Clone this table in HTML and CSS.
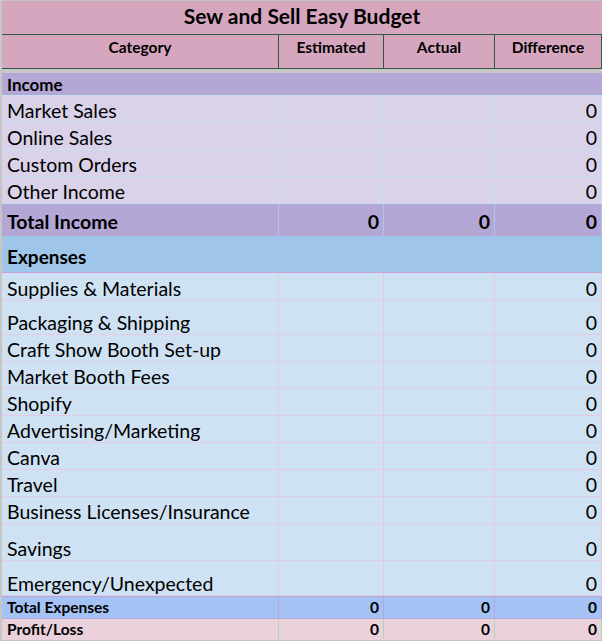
FILE: index.html
```html
<!DOCTYPE html>
<html lang="en">
<head>
<meta charset="utf-8">
<title>Sew and Sell Easy Budget</title>
<link rel="stylesheet" href="styles.css">
</head>
<body>
<div class="sheet">
  <div class="title">Sew and Sell Easy Budget</div>
  <div class="row head">
    <div class="cell">Category</div>
    <div class="cell">Estimated</div>
    <div class="cell">Actual</div>
    <div class="cell">Difference</div>
  </div>
  <div class="gap"></div>

  <div class="row sec income-sec h23"><div class="cell">Income</div></div>
  <div class="row inc h27"><div class="cell">Market Sales</div><div class="cell"></div><div class="cell"></div><div class="cell num">0</div></div>
  <div class="row inc h27"><div class="cell">Online Sales</div><div class="cell"></div><div class="cell"></div><div class="cell num">0</div></div>
  <div class="row inc h27"><div class="cell">Custom Orders</div><div class="cell"></div><div class="cell"></div><div class="cell num">0</div></div>
  <div class="row inc h27"><div class="cell">Other Income</div><div class="cell"></div><div class="cell"></div><div class="cell num">0</div></div>
  <div class="row tot-inc"><div class="cell">Total Income</div><div class="cell num">0</div><div class="cell num">0</div><div class="cell num">0</div></div>

  <div class="row sec exp-sec"><div class="cell">Expenses</div></div>
  <div class="row exp h28"><div class="cell">Supplies &amp; Materials</div><div class="cell"></div><div class="cell"></div><div class="cell num">0</div></div>
  <div class="row exp h34"><div class="cell">Packaging &amp; Shipping</div><div class="cell"></div><div class="cell"></div><div class="cell num">0</div></div>
  <div class="row exp h27"><div class="cell">Craft Show Booth Set-up</div><div class="cell"></div><div class="cell"></div><div class="cell num">0</div></div>
  <div class="row exp h27"><div class="cell">Market Booth Fees</div><div class="cell"></div><div class="cell"></div><div class="cell num">0</div></div>
  <div class="row exp h27"><div class="cell">Shopify</div><div class="cell"></div><div class="cell"></div><div class="cell num">0</div></div>
  <div class="row exp h27"><div class="cell">Advertising/Marketing</div><div class="cell"></div><div class="cell"></div><div class="cell num">0</div></div>
  <div class="row exp h27"><div class="cell">Canva</div><div class="cell"></div><div class="cell"></div><div class="cell num">0</div></div>
  <div class="row exp h27"><div class="cell">Travel</div><div class="cell"></div><div class="cell"></div><div class="cell num">0</div></div>
  <div class="row exp h27"><div class="cell">Business Licenses/Insurance</div><div class="cell"></div><div class="cell"></div><div class="cell num">0</div></div>
  <div class="row exp h37"><div class="cell">Savings</div><div class="cell"></div><div class="cell"></div><div class="cell num">0</div></div>
  <div class="row exp h35"><div class="cell">Emergency/Unexpected</div><div class="cell"></div><div class="cell"></div><div class="cell num">0</div></div>

  <div class="row tot-exp"><div class="cell">Total Expenses</div><div class="cell num">0</div><div class="cell num">0</div><div class="cell num">0</div></div>
  <div class="row profit"><div class="cell">Profit/Loss</div><div class="cell num">0</div><div class="cell num">0</div><div class="cell num">0</div></div>
</div>
</body>
</html>
```

FILE: styles.css
```css
html, body {
  margin: 0;
  padding: 0;
  background: #c6c6c6;
}
body {
  font-family: Lato, "Liberation Sans", sans-serif;
  color: #000;
  width: 602px;
  height: 641px;
  overflow: hidden;
}
.sheet {
  padding: 1px 0 0 2px;
  width: 600px;
}
.title {
  height: 34px;
  box-sizing: border-box;
  background: #d5a6bd;
  border-bottom: 1px solid #2f5a42;
  text-align: center;
  font-weight: 700;
  font-size: 21px;
  line-height: 30px;
}
.row {
  display: grid;
  grid-template-columns: 277px 105px 111px 107px;
  box-sizing: border-box;
  border-bottom: 1px solid transparent;
}
.cell {
  display: flex;
  align-items: flex-end;
  padding: 0 0 0 5px;
  border-right: 1px solid transparent;
  white-space: nowrap;
  overflow: hidden;
  line-height: 1.15;
}
.cell.num {
  justify-content: flex-end;
  padding-right: 4px;
}
.head {
  height: 34px;
  background: #d5a6bd;
  border-bottom: 1px solid #2f5a42;
  font-weight: 700;
  font-size: 15.5px;
}
.head .cell {
  border-right-color: #2f5a42;
  justify-content: center;
  align-items: flex-start;
  padding: 4px 0 0 0;
}
.gap {
  height: 4px;
  background: #c8c8c8;
}
.sec .cell {
  grid-column: 1 / -1;
  font-weight: 700;
}
.income-sec {
  background: #b4a7d6;
  border-bottom-color: #c6e0f2;
  font-size: 17px;
}
.h23 { height: 23px; }
.h27 { height: 27px; }
.h28 { height: 28px; }
.h34 { height: 34px; }
.h35 { height: 35px; }
.h37 { height: 37px; }
.inc {
  background: #d9d2e9;
  border-bottom-color: #c6e0f2;
  font-size: 19.5px;
}
.inc .cell { border-right-color: #c6e0f2; }
.tot-inc {
  height: 32px;
  background: #b4a7d6;
  font-size: 19.5px;
  font-weight: 700;
}
.tot-inc .cell {
  border-right-color: #a9c7e8;
  padding-bottom: 2px;
}
.exp-sec {
  height: 37px;
  background: #9fc5e8;
  border-bottom-color: #c6a2d9;
  font-size: 19px;
}
.exp-sec .cell { padding-bottom: 4px; }
.exp {
  background: #cfe2f3;
  border-bottom-color: #e4cbe4;
  font-size: 19.5px;
}
.exp .cell { border-right-color: #e4cbe4; }
.tot-exp {
  height: 22px;
  background: #a4c2f4;
  border-top: 1px solid #b2a6d9;
  font-size: 15.5px;
  font-weight: 700;
}
.tot-exp .cell { border-right-color: #b6a5d8; }
.profit {
  height: 22px;
  background: #ead1dc;
  border-top: 1px solid #b6a8dc;
  font-size: 15.5px;
  font-weight: 700;
}
.profit .cell { border-right-color: #a8dca4; }
```
